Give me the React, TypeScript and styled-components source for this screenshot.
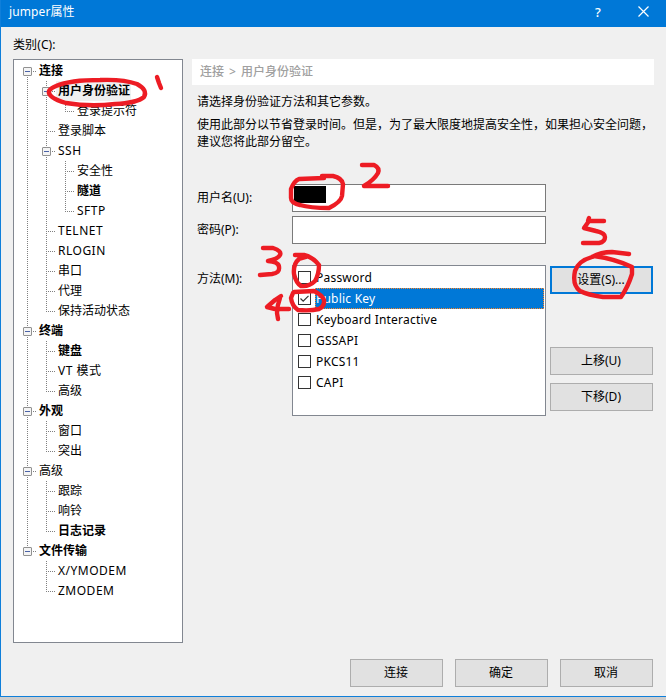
import React from 'react'
import styled, { createGlobalStyle } from 'styled-components'

const GlobalStyle = createGlobalStyle`
  * {
    box-sizing: border-box;
  }

  body {
    margin: 0;
    background: #cdcdcd;
    color: #000;
    font-family: 'Noto Sans', 'Noto Sans CJK SC', sans-serif;
    font-size: 12px;
    line-height: 20px;
    overflow: hidden;
  }
`

const Window = styled.div`
  position: relative;
  display: flex;
  flex-direction: column;
  width: 666px;
  height: 697px;
  background: #f0f0f0;
  border-left: 1px solid #0f7fda;
  border-bottom: 1px solid #0f7fda;
  box-shadow: 0 1px 3px #999;
`

const TitleBar = styled.header`
  display: flex;
  align-items: center;
  height: 27px;
  padding: 0 17px 4px 8px;
  background: #0078d7;
  color: #fff;
`

const Title = styled.span`
  flex: 1;
  letter-spacing: 0.1px;
`

const HelpMark = styled.span`
  width: 12px;
  margin-right: 34px;
  text-align: center;
  font-size: 13px;
  font-weight: 500;
`

const CloseIcon = styled.svg`
  width: 11px;
  height: 11px;
`

const Content = styled.div`
  display: flex;
  flex: 1;
  gap: 9px;
  padding: 8px 12px 0 12px;
`

const Sidebar = styled.aside`
  width: 170px;
`

const SidebarLabel = styled.div`
  height: 24px;
  letter-spacing: 0.1px;
`

const Tree = styled.div`
  height: 584px;
  padding: 1px 0 0 4px;
  background: #fff;
  border: 1px solid #828790;
`

const TreeRow = styled.div`
  display: flex;
  height: 20px;
`

const dots = (angle: string) => `repeating-linear-gradient(${angle}, #808080 0 1px, transparent 1px 2px)`

const Guide = styled.span<{ $top?: boolean; $bottom?: boolean; $branch?: boolean }>`
  display: flex;
  align-items: center;
  width: 19px;
  padding-left: 5px;
  background-repeat: no-repeat;
  background-image: ${(p) => `${dots('180deg')}, ${dots('180deg')}, ${dots('90deg')}`};
  background-position: 9px 0, 9px 10px, 9px 10px;
  background-size: ${(p) =>
    `${p.$top ? '1px 10px' : '0 0'}, ${p.$bottom ? '1px 10px' : '0 0'}, ${p.$branch ? '9px 1px' : '0 0'}`};
`

const Expander = styled.svg`
  width: 9px;
  height: 9px;
  margin-top: 1px;
`

const TreeLabel = styled.span<{ $bold?: boolean; $active?: boolean; $latin?: boolean }>`
  padding: 0 1px 0 2px;
  background: ${(p) => (p.$active ? '#f0f0f0' : 'transparent')};
  font-weight: ${(p) => (p.$bold ? 700 : 400)};
  letter-spacing: ${(p) => (p.$latin ? 0.5 : 0)}px;
  white-space: nowrap;
`

const Main = styled.main`
  flex: 1;
  min-width: 0;
  padding-top: 24px;
`

const Breadcrumb = styled.div`
  height: 26px;
  padding-left: 8px;
  background: #fff;
  color: #a0a0a0;
  font-weight: 500;
  line-height: 26px;
  word-spacing: 2px;
`

const Description = styled.div`
  height: 99px;
  padding: 8px 0 0 5px;
  white-space: nowrap;

  p {
    margin: 0 0 5px;
    line-height: 17px;
  }

  p:first-child {
    margin-bottom: 6px;
  }
`

const Field = styled.div<{ $height: number }>`
  display: flex;
  height: ${(p) => p.$height}px;
`

const FieldLabel = styled.label`
  flex-shrink: 0;
  width: 100px;
  padding: 4px 0 0 5px;
`

const Input = styled.div`
  flex-shrink: 0;
  width: 254px;
  height: 28px;
  padding: 1px;
  background: #fff;
  border: 1px solid #7a7a7a;
`

const Redacted = styled.div`
  width: 32px;
  height: 17px;
  background: #000;
`

const MethodList = styled.div`
  flex-shrink: 0;
  width: 254px;
  height: 151px;
  padding: 1px;
  background: #fff;
  border: 1px solid #828790;
`

const MethodRow = styled.div`
  display: flex;
  align-items: center;
  height: 21px;
  padding-left: 4px;
`

const Checkbox = styled.svg`
  width: 13px;
  height: 13px;
`

const MethodName = styled.span<{ $selected?: boolean }>`
  flex: 1;
  height: 21px;
  margin-left: 4px;
  border: 1px dotted ${(p) => (p.$selected ? '#ff8728' : 'transparent')};
  background: ${(p) => (p.$selected ? '#0078d7' : 'transparent')};
  background-clip: border-box;
  color: ${(p) => (p.$selected ? '#fff' : '#000')};
  letter-spacing: 0.22px;
  line-height: 19px;
`

const MethodActions = styled.div`
  display: flex;
  flex-direction: column;
  flex-shrink: 0;
  gap: 8px;
  margin-left: 4px;
  padding-top: 1px;
`

const Button = styled.button<{ $width: number; $focused?: boolean }>`
  width: ${(p) => p.$width}px;
  height: 28px;
  margin: 0 0 ${(p) => (p.$focused ? 45 : 0)}px;
  padding: 0 1px 0 0;
  background: #e1e1e1;
  border: ${(p) => (p.$focused ? '2px solid #0078d7' : '1px solid #adadad')};
  color: #000;
  font: inherit;
`

const Footer = styled.footer`
  display: flex;
  justify-content: flex-end;
  gap: 12px;
  height: 37px;
  padding-right: 13px;
`

const Marks = styled.svg`
  position: absolute;
  top: 0;
  left: -1px;
  pointer-events: none;
`

interface TreeNode {
  label: string
  bold?: boolean
  active?: boolean
  children?: TreeNode[]
}

const categories: TreeNode[] = [
  {
    label: '连接',
    bold: true,
    children: [
      { label: '用户身份验证', bold: true, active: true, children: [{ label: '登录提示符' }] },
      { label: '登录脚本' },
      { label: 'SSH', children: [{ label: '安全性' }, { label: '隧道', bold: true }, { label: 'SFTP' }] },
      { label: 'TELNET' },
      { label: 'RLOGIN' },
      { label: '串口' },
      { label: '代理' },
      { label: '保持活动状态' },
    ],
  },
  { label: '终端', bold: true, children: [{ label: '键盘', bold: true }, { label: 'VT 模式' }, { label: '高级' }] },
  { label: '外观', bold: true, children: [{ label: '窗口' }, { label: '突出' }] },
  { label: '高级', children: [{ label: '跟踪' }, { label: '响铃' }, { label: '日志记录', bold: true }] },
  { label: '文件传输', bold: true, children: [{ label: 'X/YMODEM' }, { label: 'ZMODEM' }] },
]

const methods = ['Password', 'Public Key', 'Keyboard Interactive', 'GSSAPI', 'PKCS11', 'CAPI']

const marks = [
  'M157 77 L159 83 L161 88',
  'M50 95 Q46 90 56 86 Q70 80 100 80 Q123 79 137 84 Q148 90 144 97 Q137 103 115 104 Q90 107 66 103 Q48 98 49 91',
  'M362 165 L374 165 Q380 168 378 173 Q374 180 364 186 L388 186',
  'M324 178 L299 179 Q294 181 291 189 L291 198 Q291 203 300 205 Q310 208 329 208 Q341 202 342 196 L343 184 Q342 178 333 176 L322 176',
  'M263 248 L273 248 Q282 251 280 255 Q278 259 268 261 Q279 262 279 267 Q280 273 272 274 L260 275',
  'M295 255 L304 255 Q313 257 319 265 Q319 274 315 281 Q309 287 301 286 Q296 283 294 274 Q293 264 299 259 L306 257',
  'M294 292 L314 291 Q322 295 324 300 Q325 306 319 309 Q311 311 298 310 Q292 306 291 298 L293 293',
  'M281 296 L275 300 L267 307 L275 309 L289 309 M280 298 Q277 306 277 313 L278 319',
  'M604 221 L589 221 L584 228 L596 231 Q605 233 605 237 Q605 242 599 243 L583 243 M589 218 L588 221',
  'M629 254 L612 252 Q601 252 592 257 Q578 261 575 271 Q572 285 580 291 Q588 295 603 297 L621 297 Q628 287 632 274 L632 267 Q616 259 594 256',
]

const Branch = ({ nodes, parents = [] }: { nodes: TreeNode[]; parents?: boolean[] }) => (
  <>
    {nodes.map((node, index) => {
      const last = index === nodes.length - 1
      const first = index === 0 && parents.length === 0
      return (
        <React.Fragment key={node.label}>
          <TreeRow>
            {parents.map((open, depth) => (
              <Guide key={depth} $top={open} $bottom={open} />
            ))}
            <Guide $top={!first} $bottom={!last} $branch>
              {node.children && (
                <Expander viewBox="0 0 9 9">
                  <rect x="0.5" y="0.5" width="8" height="8" rx="0.5" fill="#f4f4f4" stroke="#919191" />
                  <path d="M2 4.5h5" stroke="#4b63a7" />
                </Expander>
              )}
            </Guide>
            <TreeLabel $bold={node.bold} $active={node.active} $latin={/^[A-Z]/.test(node.label)}>
              {node.label}
            </TreeLabel>
          </TreeRow>
          {node.children && <Branch nodes={node.children} parents={[...parents, !last]} />}
        </React.Fragment>
      )
    })}
  </>
)

const App = () => (
  <>
    <GlobalStyle />
    <Window>
      <TitleBar>
        <Title>jumper属性</Title>
        <HelpMark>?</HelpMark>
        <CloseIcon viewBox="0 0 11 11">
          <path d="M0.5 0.5l10 10M10.5 0.5l-10 10" stroke="#fff" strokeWidth="1.2" />
        </CloseIcon>
      </TitleBar>
      <Content>
        <Sidebar>
          <SidebarLabel>类别(C):</SidebarLabel>
          <Tree>
            <Branch nodes={categories} />
          </Tree>
        </Sidebar>
        <Main>
          <Breadcrumb>连接 &gt; 用户身份验证</Breadcrumb>
          <Description>
            <p>请选择身份验证方法和其它参数。</p>
            <p>
              使用此部分以节省登录时间。但是，为了最大限度地提高安全性，如果担心安全问题，
              <br />
              建议您将此部分留空。
            </p>
          </Description>
          <Field $height={32}>
            <FieldLabel>用户名(U):</FieldLabel>
            <Input>
              <Redacted />
            </Input>
          </Field>
          <Field $height={49}>
            <FieldLabel>密码(P):</FieldLabel>
            <Input />
          </Field>
          <Field $height={151}>
            <FieldLabel>方法(M):</FieldLabel>
            <MethodList>
              {methods.map((method) => (
                <MethodRow key={method}>
                  <Checkbox viewBox="0 0 13 13">
                    <rect x="0.5" y="0.5" width="12" height="12" fill="#fff" stroke="#333" />
                    {method === 'Public Key' && (
                      <path d="M2.5 6.5l2.7 2.7 5.3-5.4" fill="none" stroke="#333" strokeWidth="1.2" />
                    )}
                  </Checkbox>
                  <MethodName $selected={method === 'Public Key'}>{method}</MethodName>
                </MethodRow>
              ))}
            </MethodList>
            <MethodActions>
              <Button $width={103} $focused>
                设置(S)...
              </Button>
              <Button $width={103}>上移(U)</Button>
              <Button $width={103}>下移(D)</Button>
            </MethodActions>
          </Field>
        </Main>
      </Content>
      <Footer>
        <Button $width={93}>连接</Button>
        <Button $width={93}>确定</Button>
        <Button $width={93}>取消</Button>
      </Footer>
      <Marks
        width="666"
        height="697"
        fill="none"
        stroke="#ed1c24"
        strokeWidth="4.4"
        strokeLinejoin="round"
        strokeLinecap="round"
      >
        {marks.map((d) => (
          <path key={d} d={d} />
        ))}
      </Marks>
    </Window>
  </>
)

export default App
